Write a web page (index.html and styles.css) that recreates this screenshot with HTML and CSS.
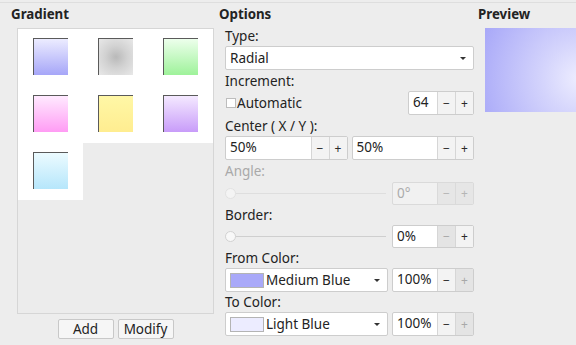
FILE: index.html
```html
<!DOCTYPE html>
<html>
<head>
<meta charset="utf-8">
<link rel="stylesheet" href="styles.css">
</head>
<body>
<div class="topline"></div>
<div class="main">
  <section class="col-gradient">
    <div class="title">Gradient</div>
    <div class="list">
      <div class="cell"><div class="sw sw-blue"></div></div>
      <div class="cell"><div class="sw sw-gray"></div></div>
      <div class="cell"><div class="sw sw-green"></div></div>
      <div class="cell"><div class="sw sw-pink"></div></div>
      <div class="cell"><div class="sw sw-yellow"></div></div>
      <div class="cell"><div class="sw sw-purple"></div></div>
      <div class="cell"><div class="sw sw-cyan"></div></div>
    </div>
    <div class="buttons">
      <button class="btn add">Add</button>
      <button class="btn modify">Modify</button>
    </div>
  </section>

  <section class="col-options">
    <div class="title">Options</div>
    <div class="label first">Type:</div>
    <div class="combo wide"><span class="ctext">Radial</span><span class="arrow"></span></div>

    <div class="label">Increment:</div>
    <div class="row">
      <label class="check"><span class="box"></span>Automatic</label>
      <div class="spin s64"><span class="val">64</span><span class="b">−</span><span class="b">+</span></div>
    </div>

    <div class="label">Center ( X / Y ):</div>
    <div class="row">
      <div class="spin half"><span class="val">50%</span><span class="b">−</span><span class="b">+</span></div>
      <div class="spin half"><span class="val">50%</span><span class="b">−</span><span class="b">+</span></div>
    </div>

    <div class="label loose disabled">Angle:</div>
    <div class="row short">
      <div class="slider off"><span class="track"></span><span class="knob"></span></div>
      <div class="spin side dis"><span class="val">0°</span><span class="b">−</span><span class="b">+</span></div>
    </div>

    <div class="label tight">Border:</div>
    <div class="row short">
      <div class="slider"><span class="track"></span><span class="knob"></span></div>
      <div class="spin side"><span class="val">0%</span><span class="b off">−</span><span class="b">+</span></div>
    </div>

    <div class="label tight">From Color:</div>
    <div class="row">
      <div class="combo color"><span class="chip medium"></span><span class="ctext">Medium Blue</span><span class="arrow"></span></div>
      <div class="spin side"><span class="val">100%</span><span class="b">−</span><span class="b off">+</span></div>
    </div>

    <div class="label tight">To Color:</div>
    <div class="row">
      <div class="combo color"><span class="chip light"></span><span class="ctext">Light Blue</span><span class="arrow"></span></div>
      <div class="spin side"><span class="val">100%</span><span class="b">−</span><span class="b off">+</span></div>
    </div>
  </section>

  <section class="col-preview">
    <div class="title">Preview</div>
    <div class="preview"></div>
  </section>
</div>
</body>
</html>
```

FILE: styles.css
```css
* { box-sizing: border-box; }
html, body {
  margin: 0;
  padding: 0;
}
body {
  width: 576px;
  height: 345px;
  overflow: hidden;
  background: #ededed;
  color: #232323;
  font-family: "Noto Sans", "DejaVu Sans", sans-serif;
  font-size: 13.5px;
}
.topline {
  height: 3px;
  border-bottom: 1px solid #dedede;
}
.main {
  display: flex;
  align-items: flex-start;
}
.title {
  font-weight: bold;
  font-size: 13.3px;
  height: 17px;
  line-height: 17px;
  margin-top: 3px;
}

/* Gradient column */
.col-gradient {
  width: 219px;
  flex: none;
}
.col-gradient .title { margin-left: 11px; }
.list {
  margin: 5px 0 0 17px;
  width: 197px;
  height: 286px;
  border: 1px solid #d6d6d6;
  background: #ececec;
  display: grid;
  grid-template-columns: repeat(3, 65px);
  grid-auto-rows: 57px;
  align-content: start;
}
.cell {
  background: #fff;
  padding: 9px 0 0 15px;
}
.sw {
  width: 35px;
  height: 37px;
  border-top: 1px solid #5a5a5a;
  border-left: 1px solid #5a5a5a;
}
.sw-blue { background: linear-gradient(#ececff, #a6a6f8); }
.sw-gray { background: radial-gradient(circle at 50% 50%, #b9b9b9 0%, #d2d2d2 45%, #e8e8e8 100%); }
.sw-green { background: linear-gradient(#edffec, #9ef29a); }
.sw-pink { background: linear-gradient(#ffeaff, #ff9cf4); }
.sw-yellow { background: linear-gradient(#fff7a6, #ffed90); }
.sw-purple { background: linear-gradient(#f4e9ff, #c89cf9); }
.sw-cyan { background: linear-gradient(#ecfbff, #b6e6fb); }

.buttons {
  display: flex;
  justify-content: center;
  gap: 4px;
  margin: 5px 0 0 17px;
  width: 197px;
}
.btn {
  height: 20px;
  padding: 0;
  border: 1px solid #c8c8c8;
  border-radius: 2px;
  background: #f6f6f6;
  font: inherit;
  color: #232323;
  line-height: 17px;
}
.btn.add { width: 56px; }
.btn.modify { width: 56px; }

/* Options column */
.col-options {
  width: 259px;
  flex: none;
}
.col-options > .label,
.col-options > .combo,
.col-options > .row {
  margin-left: 6px;
  width: 249px;
}
.label {
  height: 21px;
  line-height: 20px;
  padding-top: 1px;
}
.label.first { height: 23px; padding-top: 3px; }
.label.loose { height: 22px; padding-top: 1px; }
.label.tight { height: 20px; padding-top: 0; }
.label.disabled { color: #a9a9a9; }
.row {
  display: flex;
  align-items: center;
  justify-content: space-between;
  gap: 4px;
  height: 24px;
}
.row.short { height: 23px; }
.row.short .spin { height: 23px; }
.combo {
  position: relative;
  display: flex;
  align-items: center;
  height: 24px;
  border: 1px solid #cdcdcd;
  border-radius: 2px;
  background: #fff;
  padding-left: 4px;
}
.combo .ctext { flex: 1; }
.arrow {
  width: 0;
  height: 0;
  border-left: 3px solid transparent;
  border-right: 3px solid transparent;
  border-top: 3px solid #333;
  margin-right: 7px;
}
.combo.color { width: 163px; flex: none; }
.chip {
  width: 34px;
  height: 15px;
  border: 1px solid #b4b4b4;
  margin-right: 2px;
}
.chip.medium { background: #a9a9f9; }
.chip.light { background: #ececff; }

.check {
  display: flex;
  align-items: center;
}
.check .box {
  width: 10px;
  height: 10px;
  border: 1px solid #bdbdbd;
  background: #fff;
  margin: 0 1px 0 1px;
}

.spin {
  display: flex;
  height: 24px;
  border: 1px solid #cdcdcd;
  border-radius: 2px;
  background: #fff;
  flex: none;
}
.spin .val {
  flex: 1;
  padding-left: 4px;
  line-height: 21px;
}
.spin .b {
  width: 18px;
  border-left: 1px solid #d6d6d6;
  background: #f3f3f3;
  display: flex;
  align-items: center;
  justify-content: center;
  font-size: 12px;
  color: #2a2a2a;
}
.spin .b.off { background: #e4e4e4; color: #a8a8a8; }
.spin.s64 { width: 66px; }
.spin.half { flex: 1; }
.spin.side { width: 82px; }
.spin.dis { background: #f1f1f1; border-color: #dadada; color: #ababab; }
.spin.dis .b { background: #e6e6e6; color: #b5b5b5; border-left-color: #dadada; }

.slider {
  position: relative;
  flex: 1;
  height: 23px;
}
.slider .track {
  position: absolute;
  left: 0;
  right: 2px;
  top: 11px;
  height: 1px;
  background: #cfcfcf;
}
.slider .knob {
  position: absolute;
  left: 0;
  top: 6px;
  width: 11px;
  height: 11px;
  border-radius: 50%;
  background: #f8f8f8;
  border: 1px solid #d2d2d2;
}
.slider.off .track { background: #dedede; }
.slider.off .knob { border-color: #e2e2e2; background: #f4f4f4; }

/* Preview column */
.col-preview {
  flex: none;
  width: 98px;
}
.preview {
  margin: 5px 0 0 7px;
  width: 100px;
  height: 84px;
  background: radial-gradient(circle at 95% 60%, #eeeeff 0%, #d4d4fc 35%, #a8a8f8 100%);
}
```
